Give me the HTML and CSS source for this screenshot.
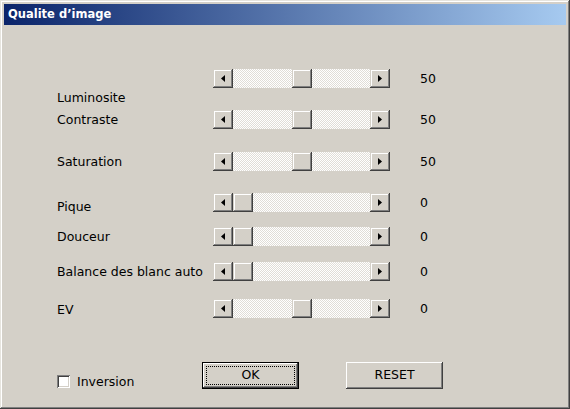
FILE: index.html
```html
<!DOCTYPE html>
<html>

<head>
  <link rel="stylesheet" href="styles.css">
</head>

<body>
  <div class="window">
    <div class="titlebar">Qualite d’image</div>

    <div class="dialog">
      <div class="sliders">
        <div class="row row-first">
          <span class="label">Luminosite</span>
          <div class="scroll">
            <div class="arrow"><svg width="4" height="7" viewBox="0 0 4 7"><polygon points="4,0 4,7 0,3.5" /></svg></div>
            <div class="track"><div class="thumb" style="margin-left: 59px"></div></div>
            <div class="arrow"><svg width="4" height="7" viewBox="0 0 4 7"><polygon points="0,0 0,7 4,3.5" /></svg></div>
          </div>
          <span class="value">50</span>
        </div>

        <div class="row">
          <span class="label">Contraste</span>
          <div class="scroll">
            <div class="arrow"><svg width="4" height="7" viewBox="0 0 4 7"><polygon points="4,0 4,7 0,3.5" /></svg></div>
            <div class="track"><div class="thumb" style="margin-left: 59px"></div></div>
            <div class="arrow"><svg width="4" height="7" viewBox="0 0 4 7"><polygon points="0,0 0,7 4,3.5" /></svg></div>
          </div>
          <span class="value">50</span>
        </div>

        <div class="row">
          <span class="label">Saturation</span>
          <div class="scroll">
            <div class="arrow"><svg width="4" height="7" viewBox="0 0 4 7"><polygon points="4,0 4,7 0,3.5" /></svg></div>
            <div class="track"><div class="thumb" style="margin-left: 59px"></div></div>
            <div class="arrow"><svg width="4" height="7" viewBox="0 0 4 7"><polygon points="0,0 0,7 4,3.5" /></svg></div>
          </div>
          <span class="value">50</span>
        </div>

        <div class="row row-low">
          <span class="label">Pique</span>
          <div class="scroll">
            <div class="arrow"><svg width="4" height="7" viewBox="0 0 4 7"><polygon points="4,0 4,7 0,3.5" /></svg></div>
            <div class="track"><div class="thumb" style="margin-left: 0px"></div></div>
            <div class="arrow"><svg width="4" height="7" viewBox="0 0 4 7"><polygon points="0,0 0,7 4,3.5" /></svg></div>
          </div>
          <span class="value">0</span>
        </div>

        <div class="row">
          <span class="label">Douceur</span>
          <div class="scroll">
            <div class="arrow"><svg width="4" height="7" viewBox="0 0 4 7"><polygon points="4,0 4,7 0,3.5" /></svg></div>
            <div class="track"><div class="thumb" style="margin-left: 0px"></div></div>
            <div class="arrow"><svg width="4" height="7" viewBox="0 0 4 7"><polygon points="0,0 0,7 4,3.5" /></svg></div>
          </div>
          <span class="value">0</span>
        </div>

        <div class="row">
          <span class="label">Balance des blanc auto</span>
          <div class="scroll">
            <div class="arrow"><svg width="4" height="7" viewBox="0 0 4 7"><polygon points="4,0 4,7 0,3.5" /></svg></div>
            <div class="track"><div class="thumb" style="margin-left: 0px"></div></div>
            <div class="arrow"><svg width="4" height="7" viewBox="0 0 4 7"><polygon points="0,0 0,7 4,3.5" /></svg></div>
          </div>
          <span class="value">0</span>
        </div>

        <div class="row row-last">
          <span class="label">EV</span>
          <div class="scroll">
            <div class="arrow"><svg width="4" height="7" viewBox="0 0 4 7"><polygon points="4,0 4,7 0,3.5" /></svg></div>
            <div class="track"><div class="thumb" style="margin-left: 59px"></div></div>
            <div class="arrow"><svg width="4" height="7" viewBox="0 0 4 7"><polygon points="0,0 0,7 4,3.5" /></svg></div>
          </div>
          <span class="value">0</span>
        </div>
      </div>

      <div class="footer">
        <label class="check">
          <span class="box"></span>
          <span>Inversion</span>
        </label>
        <button class="btn btn-default"><span class="focus">OK</span></button>
        <button class="btn">RESET</button>
      </div>
    </div>
  </div>
</body>

</html>
```

FILE: styles.css
```css
body {
  margin: 0;
  font-family: "DejaVu Sans", "Liberation Sans", sans-serif;
  font-size: 12.5px;
  color: #000;
}

.window {
  width: 570px;
  height: 409px;
  box-sizing: border-box;
  padding: 4px 4px;
  background-color: #d4d0c8;
  box-shadow: inset -1px -1px #404040, inset 1px 1px #e6e4de,
    inset -2px -2px #808080, inset 2px 2px #fff;
}

.titlebar {
  height: 21px;
  line-height: 21px;
  padding-left: 4px;
  background: linear-gradient(to right, #0a246a, #a6caf0);
  color: #fff;
  font-weight: bold;
  font-size: 11.5px;
}

.dialog {
  padding: 44px 0 0 53px;
}

.sliders {
  display: grid;
  grid-template-rows: 41px 42px 41px 34px 35px 37px 19px;
}

.row {
  display: grid;
  grid-template-columns: 156px 177px auto;
  align-items: start;
}

.label {
  line-height: 19px;
  white-space: nowrap;
}

.row-first .label {
  margin-top: 19px;
}

.row-low .label {
  margin-top: 4px;
}

.row-last .label {
  margin-top: 1px;
}

.value {
  line-height: 19px;
  padding-left: 30px;
}

.scroll {
  display: flex;
  height: 19px;
}

.arrow,
.thumb {
  width: 20px;
  height: 19px;
  box-sizing: border-box;
  background-color: #d4d0c8;
  box-shadow: inset -1px -1px #404040, inset 1px 1px #d4d0c8,
    inset -2px -2px #808080, inset 2px 2px #fff;
}

.arrow {
  display: flex;
  align-items: center;
  justify-content: center;
  flex: none;
}

.arrow svg {
  display: block;
  fill: #000;
}

.track {
  flex: 1;
  display: flex;
  background: repeating-conic-gradient(#fff 0 25%, #e0ddd7 0 50%) 0 0 / 2px 2px;
}

.footer {
  display: grid;
  grid-template-columns: 145px 144px auto;
  align-items: start;
  margin-top: 44px;
}

.check {
  display: flex;
  align-items: center;
  gap: 7px;
  margin-top: 12px;
}

.box {
  width: 13px;
  height: 13px;
  box-sizing: border-box;
  background-color: #fff;
  box-shadow: inset 1px 1px #808080, inset -1px -1px #fff,
    inset 2px 2px #404040, inset -2px -2px #d4d0c8;
}

.btn {
  width: 97px;
  height: 27px;
  padding: 0 0 2px;
  border: none;
  font-family: inherit;
  font-size: 12.5px;
  color: #000;
  background-color: #d4d0c8;
  box-shadow: inset -1px -1px #404040, inset 1px 1px #fff,
    inset -2px -2px #808080, inset 2px 2px #d4d0c8;
}

.btn-default {
  width: 97px;
  padding: 4px;
  box-shadow: inset 0 0 0 1px #000, inset -2px -2px #404040,
    inset 2px 2px #fff, inset -3px -3px #808080;
}

.focus {
  display: block;
  height: 100%;
  box-sizing: border-box;
  border: 1px dotted #000;
  line-height: 15px;
}
```
